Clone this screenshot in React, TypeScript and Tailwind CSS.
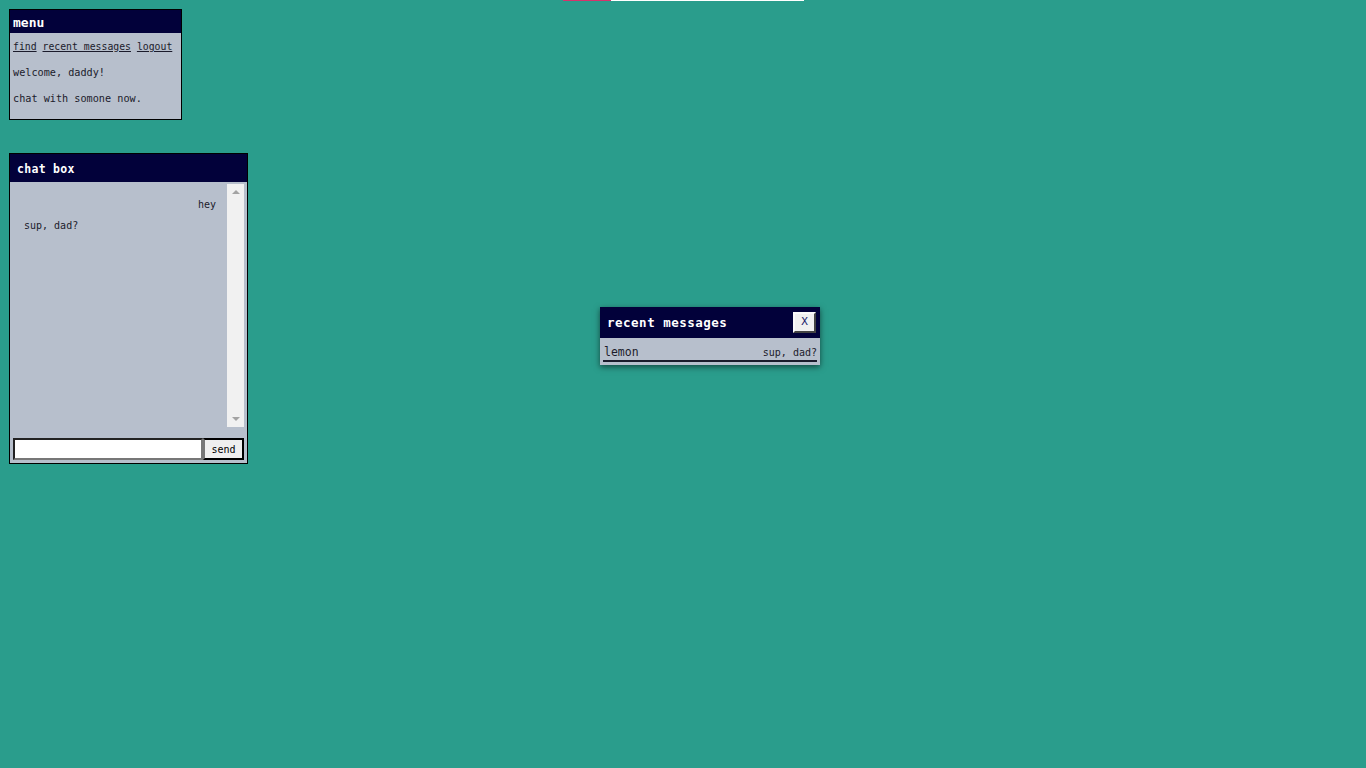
import React from 'react'

const mono = { fontFamily: '"DejaVu Sans Mono", "Liberation Mono", monospace' }

export default function App() {
    return (
        <div className="relative min-h-screen w-full bg-[#2a9d8c] text-[#1b1b2b]" style={mono}>
            {/* progress strip at the top */}
            <div className="absolute top-0 left-[563px] flex h-px w-[241px]">
                <div className="w-[48px] bg-[#d6336c]" />
                <div className="flex-1 bg-white" />
            </div>

            <div className="flex flex-col items-start gap-[33px] pl-[9px] pt-[9px]">
                {/* menu */}
                <div className="w-[173px] border border-black bg-[#b7bfcc]">
                    <div className="flex h-[23px] items-center bg-[#02013a] px-[3px] pt-[2px] text-[13px] font-bold text-white">menu</div>
                    <div className="px-[3px] pb-[8px] text-[10px]">
                        <div className="h-[26px] pt-[1px] text-[9.8px] leading-[26px]">
                            <a className="underline">find</a> <a className="underline">recent messages</a> <a className="underline">logout</a>
                        </div>
                        <div className="flex h-[26px] items-center pt-[1px] text-[10.2px]">welcome, daddy!</div>
                        <div className="flex h-[26px] items-center pt-[1px] text-[10.2px]">chat with somone now.</div>
                    </div>
                </div>

                {/* chat box */}
                <div className="w-[239px] border border-black bg-[#b7bfcc]">
                    <div className="flex h-[28px] items-center bg-[#02013a] px-[7px] pt-[3px] text-[11.5px] font-bold text-white tracking-[0.3px]">chat box</div>
                    <div className="flex h-[256px] pl-[2px] pr-[3px] pt-[2px]">
                        <div className="flex-1 pl-[12px] pr-[11px] pt-[10px] text-[10px]">
                            <div className="flex h-[21px] items-center justify-end">hey</div>
                            <div className="flex h-[21px] items-center">sup, dad?</div>
                        </div>
                        {/* scrollbar */}
                        <div className="flex h-[243px] w-[17px] flex-col items-center justify-between bg-[#f1f1f1] py-[6px]">
                            <div className="h-0 w-0 border-x-[4px] border-b-[4px] border-x-transparent border-b-[#a3a3a3]" />
                            <div className="h-0 w-0 border-x-[4px] border-t-[4px] border-x-transparent border-t-[#a3a3a3]" />
                        </div>
                    </div>
                    <div className="flex px-[3px] pb-[3px]">
                        <input className="h-[22px] w-[190px] border-2 border-t-[#222] border-l-[#222] border-b-[#777] border-r-[#777] bg-white outline-none" />
                        <button className="flex h-[22px] w-[41px] items-center justify-center border-2 border-l-[#777] border-t-black border-r-black border-b-black bg-[#efefef] pt-[1px] text-[10px] text-black">send</button>
                    </div>
                </div>
            </div>

            {/* recent messages popup */}
            <div className="absolute left-[600px] top-[307px] w-[220px] bg-[#b7bfcc] shadow-[0_2px_6px_rgba(0,0,0,0.55)]">
                <div className="flex h-[31px] items-center justify-between bg-[#02013a] pl-[7px] pr-[4px]">
                    <span className="pt-[2px] text-[12.5px] font-bold tracking-[0.5px] text-white">recent messages</span>
                    <button className="flex h-[21px] w-[23px] items-center justify-center border-2 border-t-[#fafafa] border-l-[#fafafa] border-b-[#444] border-r-[#444] bg-[#f0f0f0] text-[11px] text-[#1b1b6b]">X</button>
                </div>
                <div className="px-[3px] pb-[3px] pt-[3px]">
                    <div className="flex h-[21px] items-end justify-between border-b-2 border-[#1b1b2b] pb-[2px] leading-none">
                        <span className="pl-[1px] text-[11.5px]">lemon</span>
                        <span className="text-[10px]">sup, dad?</span>
                    </div>
                </div>
            </div>
        </div>
    )
}
